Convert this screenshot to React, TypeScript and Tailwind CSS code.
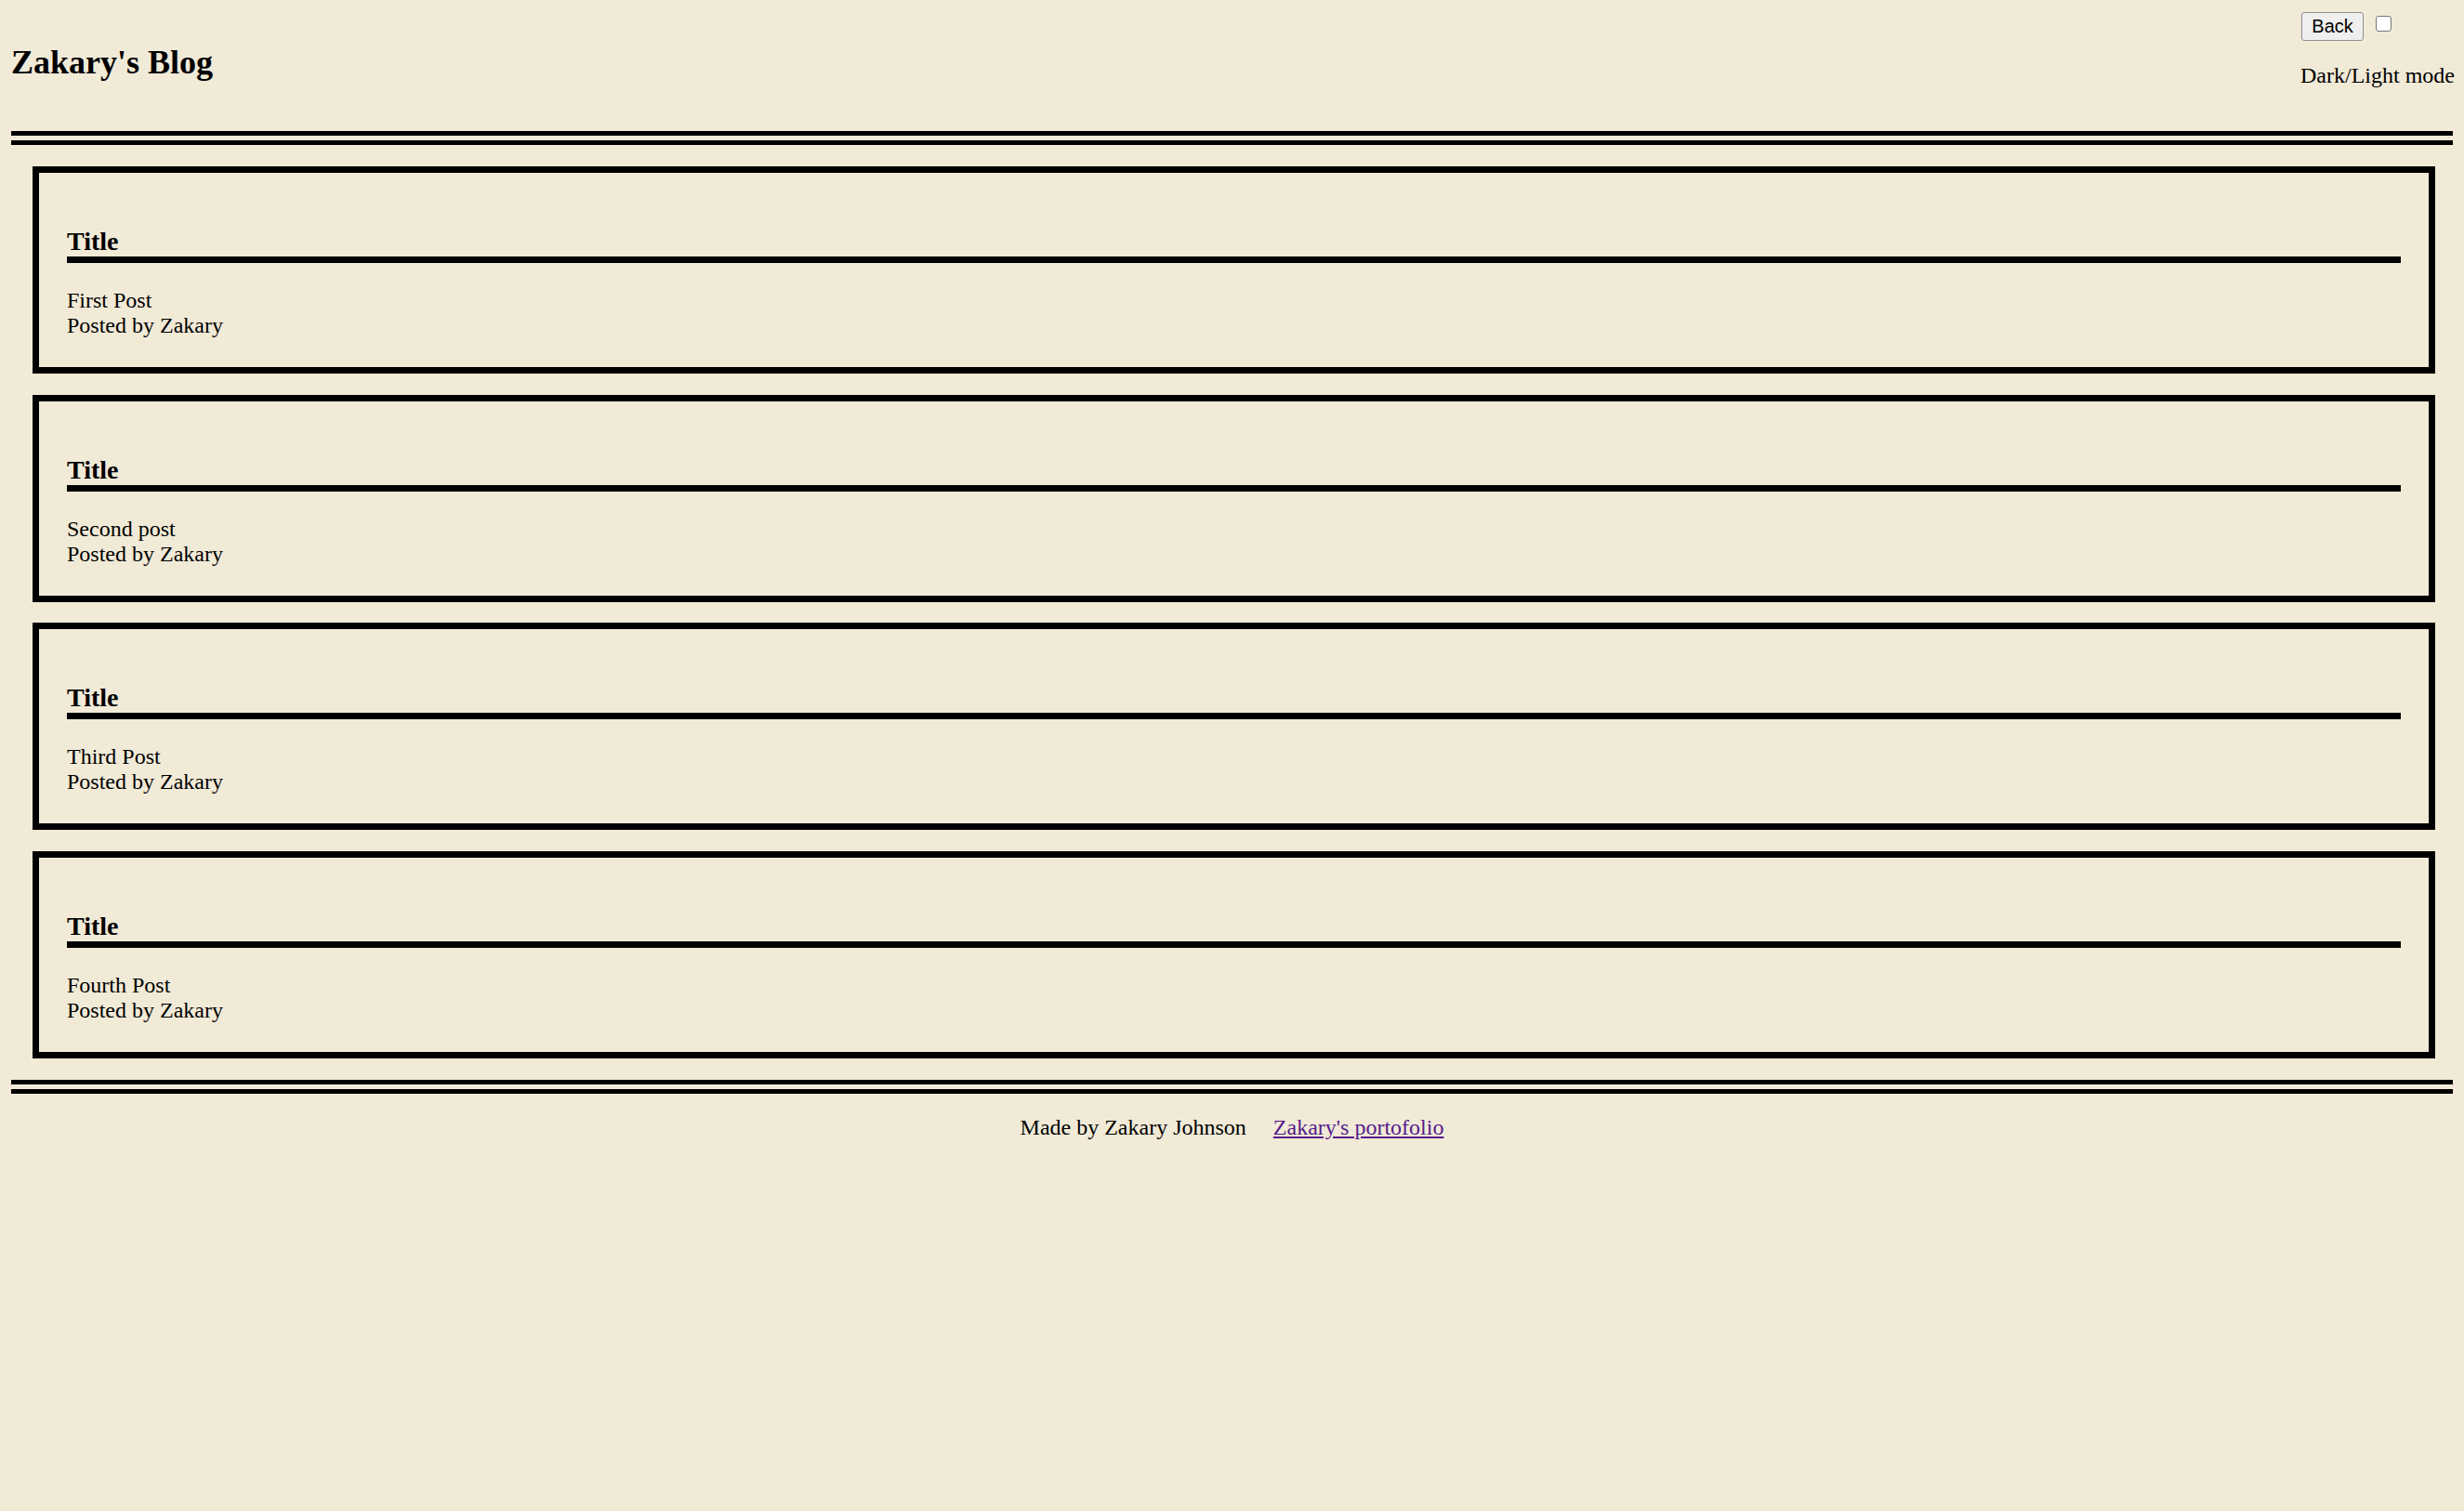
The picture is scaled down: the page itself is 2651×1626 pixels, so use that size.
const posts = ["First Post", "Second post", "Third Post", "Fourth Post"];

function DoubleRule() {
    return <div className="h-[15px] border-y-[5px] border-black"></div>;
}

function PostCard({ body }: { body: string }) {
    return (
        <div className="ml-[23px] mr-[19px] h-[223px] border-[7px] border-black px-[30px] pt-[30px]">
            <h3 className="mt-[28px] mb-[27px] border-b-[7px] border-black text-[28px] leading-[32px] font-bold">Title</h3>
            <div className="leading-[27px]">
                <div>{body}</div>
                <div>Posted by Zakary</div>
            </div>
        </div>
    );
}

export default function App() {
    return (
        <div className="min-h-screen bg-[#f1ead7] px-[12px] text-[24px] text-black font-['Liberation_Serif',serif]">
            {/* Header */}
            <header className="flex items-start h-[141px]">
                <h2 className="mt-[47px] text-[36px] leading-[41px] font-bold">Zakary's Blog</h2>
                <div className="ml-auto mr-[-2px] pt-[13px]">
                    <div className="flex items-start">
                        <button className="ml-[1px] h-[31px] w-[67px] rounded-[3px] border border-[#8f8f8f] bg-[#efefef] text-[20px] leading-[23px] font-['Liberation_Sans',sans-serif]">
                            Back
                        </button>
                        <input
                            type="checkbox"
                            className="ml-[13px] mt-[4px] h-[17px] w-[17px] appearance-none rounded-[3px] border border-[#767676] bg-white"
                        />
                    </div>
                    <p className="mt-[24px] leading-[27px] whitespace-nowrap">Dark/Light mode</p>
                </div>
            </header>

            <DoubleRule />

            {/* Posts */}
            <div className="flex flex-col gap-[22.5px] py-[23px]">
                {posts.map((p) => (
                    <PostCard key={p} body={p} />
                ))}
            </div>

            <DoubleRule />

            {/* Footer */}
            <footer className="mt-[23px] flex justify-center gap-[29px] leading-[27px]">
                <span>Made by Zakary Johnson</span>
                <a href="#" className="text-[#551a8b] underline">Zakary's portofolio</a>
            </footer>
        </div>
    );
}
